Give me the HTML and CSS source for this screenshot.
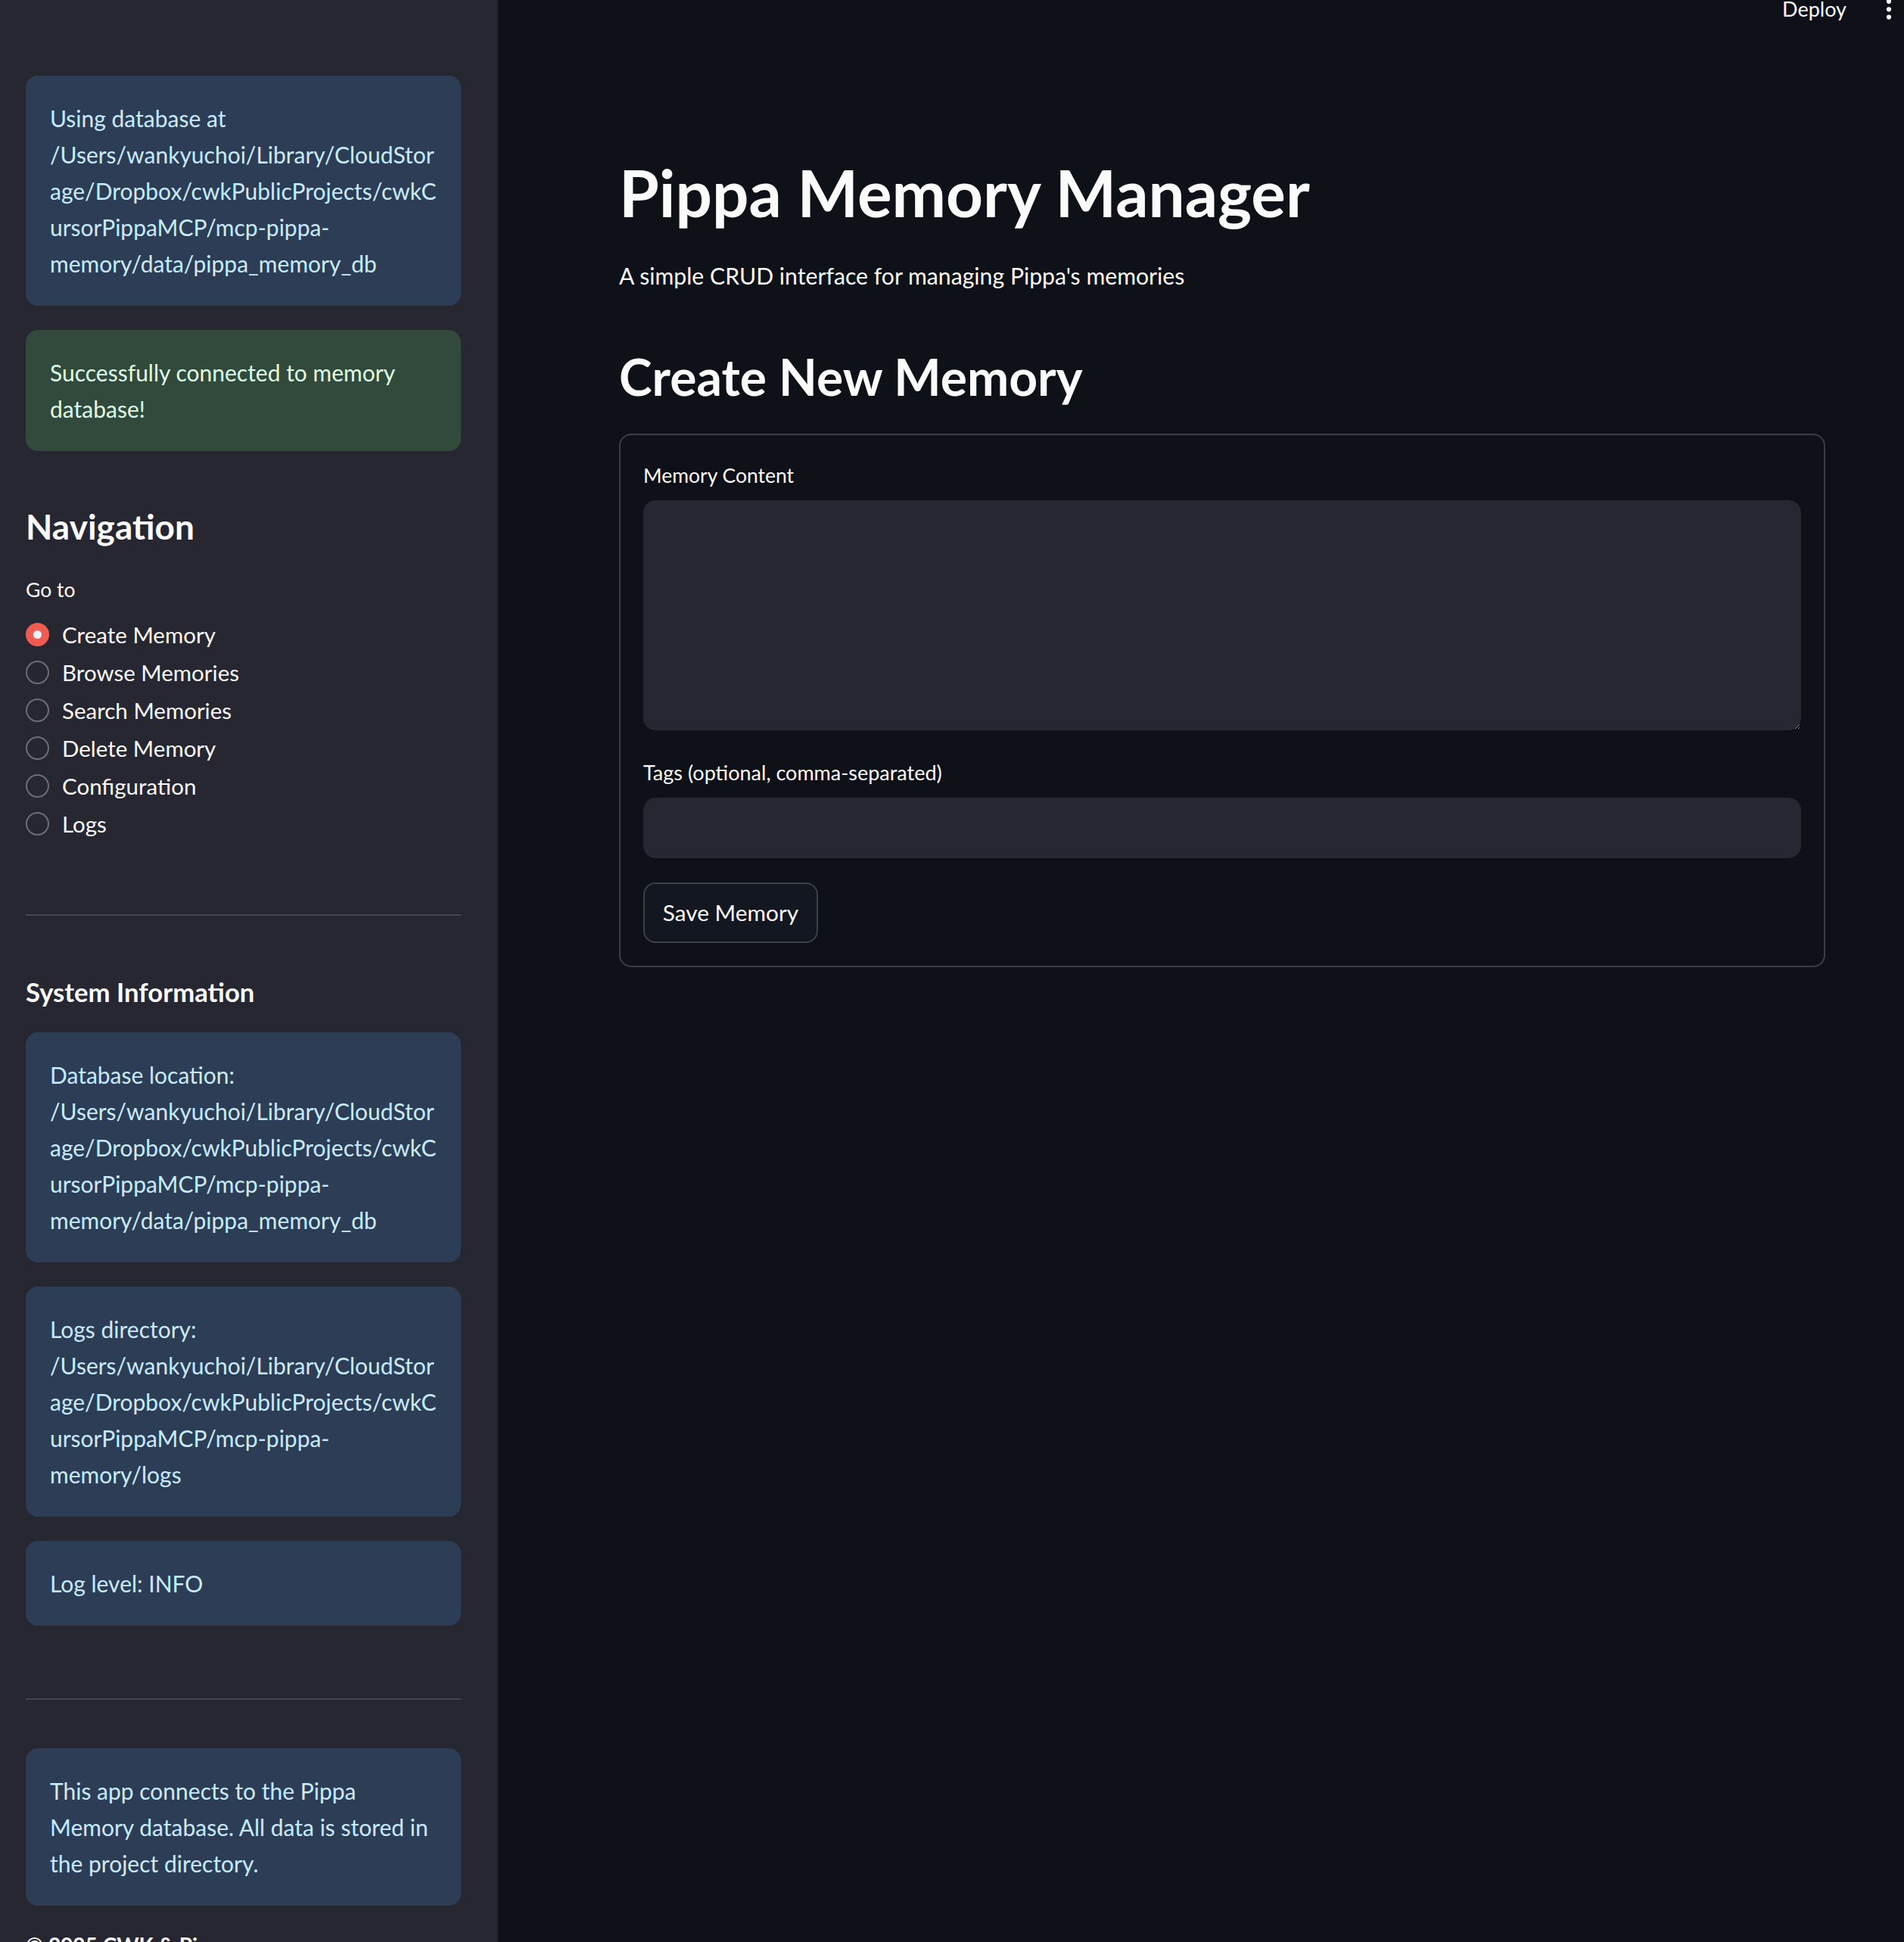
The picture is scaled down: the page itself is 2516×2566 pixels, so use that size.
FILE: index.html
```html
<!DOCTYPE html>
<html lang="en">
<head>
<meta charset="utf-8">
<title>Pippa Memory Manager</title>
<link rel="stylesheet" href="styles.css">
</head>
<body>
<div class="app">
  <aside class="sidebar">
    <div class="alert info first">Using database at<br>/Users/wankyuchoi/Library/CloudStor<br>age/Dropbox/cwkPublicProjects/cwkC<br>ursorPippaMCP/mcp-pippa-<br>memory/data/pippa_memory_db</div>
    <div class="alert success">Successfully connected to memory database!</div>

    <h2 class="side-h2">Navigation</h2>
    <div class="widget-label">Go to</div>
    <div class="radio-group">
      <div class="radio-item selected"><span class="radio-dot"></span><span class="radio-text">Create Memory</span></div>
      <div class="radio-item"><span class="radio-dot"></span><span class="radio-text">Browse Memories</span></div>
      <div class="radio-item"><span class="radio-dot"></span><span class="radio-text">Search Memories</span></div>
      <div class="radio-item"><span class="radio-dot"></span><span class="radio-text">Delete Memory</span></div>
      <div class="radio-item"><span class="radio-dot"></span><span class="radio-text">Configuration</span></div>
      <div class="radio-item"><span class="radio-dot"></span><span class="radio-text">Logs</span></div>
    </div>

    <hr class="divider nav-divider">

    <h3 class="side-h3">System Information</h3>
    <div class="alert info sys-first">Database location:<br>/Users/wankyuchoi/Library/CloudStor<br>age/Dropbox/cwkPublicProjects/cwkC<br>ursorPippaMCP/mcp-pippa-<br>memory/data/pippa_memory_db</div>
    <div class="alert info">Logs directory:<br>/Users/wankyuchoi/Library/CloudStor<br>age/Dropbox/cwkPublicProjects/cwkC<br>ursorPippaMCP/mcp-pippa-<br>memory/logs</div>
    <div class="alert info">Log level: INFO</div>

    <hr class="divider info-divider">

    <div class="alert info about">This app connects to the Pippa Memory database. All data is stored in the project directory.</div>
    <div class="copyright">© 2025 CWK &amp; Pippa</div>
  </aside>

  <main class="main">
    <header class="topbar">
      <span class="deploy">Deploy</span>
      <svg class="kebab" width="8" height="28" viewBox="0 0 8 28" aria-hidden="true">
        <circle cx="4" cy="1.8" r="3.1" fill="#fafafa"/>
        <circle cx="4" cy="12.3" r="3.1" fill="#fafafa"/>
        <circle cx="4" cy="22.6" r="3.1" fill="#fafafa"/>
      </svg>
    </header>

    <div class="block">
      <h1 class="title">Pippa Memory Manager</h1>
      <p class="subtitle">A simple CRUD interface for managing Pippa's memories</p>
      <h2 class="section">Create New Memory</h2>

      <form class="form">
        <label class="field-label">Memory Content</label>
        <textarea class="textarea"></textarea>
        <label class="field-label tags-label">Tags (optional, comma-separated)</label>
        <input class="text-input" type="text">
        <button class="btn" type="button">Save Memory</button>
      </form>
    </div>
  </main>
</div>
</body>
</html>
```

FILE: styles.css
```css
html, body {
  margin: 0;
  padding: 0;
  height: 100%;
  overflow: hidden;
  background: #0e1117;
}

body {
  font-family: Lato, "Noto Sans", sans-serif;
  color: #fafafa;
}

.app {
  display: flex;
  height: 2566px;
  overflow: hidden;
}

/* ---------- Sidebar ---------- */
.sidebar {
  width: 658px;
  flex: 0 0 658px;
  box-sizing: border-box;
  background: #262730;
  padding: 0 49px 0 34px;
  display: flex;
  flex-direction: column;
  overflow: hidden;
}

.sidebar > * {
  flex-shrink: 0;
}

.alert {
  border-radius: 16px;
  padding: 32px;
  font-size: 30px;
  line-height: 48px;
  margin-top: 32px;
  overflow-wrap: anywhere;
}

.alert.info {
  background: #2e3d56;
  color: #c7ebff;
}

.alert.success {
  background: #314a3c;
  color: #dffde9;
}

.alert.first { margin-top: 100px; }

.side-h2 {
  margin: 71px 0 0;
  font-size: 46px;
  line-height: 57.6px;
  font-weight: 700;
  color: #fafafa;
}

.widget-label {
  margin-top: 32px;
  font-size: 26.5px;
  line-height: 44.8px;
  color: #fafafa;
}

.radio-group {
  margin-top: 12px;
  display: flex;
  flex-direction: column;
}

.radio-item {
  height: 50px;
  display: flex;
  align-items: center;
  gap: 17px;
  font-size: 29.5px;
  color: #fafafa;
}

.radio-dot {
  width: 31px;
  height: 31px;
  box-sizing: border-box;
  border-radius: 50%;
  border: 2px solid #6d6e75;
  flex: 0 0 31px;
  position: relative;
}

.radio-item.selected .radio-dot {
  border: none;
  background: #ef5a52;
}

.radio-item.selected .radio-dot::after {
  content: "";
  position: absolute;
  left: 50%;
  top: 50%;
  width: 11px;
  height: 11px;
  margin: -5.5px 0 0 -5.5px;
  border-radius: 50%;
  background: #f0f2f6;
}

.divider {
  display: block;
  border: none;
  height: 2px;
  background: #45464d;
  margin: 0;
  overflow: visible;
}

.nav-divider { margin-top: 95px; }

.side-h3 {
  margin: 79px 0 0;
  font-size: 34.7px;
  line-height: 43.2px;
  font-weight: 700;
  color: #fafafa;
}

.alert.sys-first { margin-top: 31px; }

.info-divider { margin-top: 96px; }

.alert.about { margin-top: 64px; }

.copyright {
  margin-top: 30px;
  font-size: 28px;
  line-height: 44.8px;
  font-weight: 700;
  color: #fafafa;
  white-space: nowrap;
}

/* ---------- Main ---------- */
.main {
  flex: 1 1 auto;
  position: relative;
  background: #0e1117;
  padding: 0 104px 0 160px;
  box-sizing: border-box;
}

.topbar {
  position: absolute;
  top: -5px;
  right: 16px;
  display: flex;
  align-items: flex-start;
  gap: 52px;
}

.deploy {
  font-size: 27px;
  line-height: 33.6px;
  color: #fafafa;
}

.kebab {
  margin-top: 5px;
}

.block {
  padding-top: 204px;
}

.title {
  margin: 0;
  font-size: 85.4px;
  line-height: 100.8px;
  font-weight: 700;
  color: #fafafa;
}

.subtitle {
  margin: 35px 0 0;
  font-size: 30.2px;
  line-height: 48px;
  color: #fafafa;
}

.section {
  margin: 70px 0 0;
  font-size: 66px;
  line-height: 1.2;
  font-weight: 700;
  color: #fafafa;
}

.form {
  margin-top: 36px;
  border: 2px solid #3c3e44;
  border-radius: 16px;
  padding: 31px 30px 30px;
  display: flex;
  flex-direction: column;
  align-items: flex-start;
}

.field-label {
  font-size: 26.5px;
  line-height: 44.8px;
  color: #fafafa;
}

.textarea {
  margin-top: 10px;
  width: 100%;
  height: 304px;
  box-sizing: border-box;
  background: #262730;
  border: 1px solid #262730;
  border-radius: 16px;
  color: #fafafa;
  font-family: inherit;
  font-size: 30px;
  padding: 16px 24px;
  resize: vertical;
  outline: none;
}

.tags-label {
  margin-top: 34px;
  font-size: 27px;
}

.text-input {
  margin-top: 10px;
  width: 100%;
  height: 80px;
  box-sizing: border-box;
  background: #262730;
  border: 1px solid #262730;
  border-radius: 16px;
  color: #fafafa;
  font-family: inherit;
  font-size: 30px;
  padding: 0 24px;
  outline: none;
}

.btn {
  margin-top: 32px;
  width: 231px;
  height: 80px;
  box-sizing: border-box;
  background: #131720;
  border: 2px solid #3e4046;
  border-radius: 16px;
  color: #fafafa;
  font-family: inherit;
  font-size: 29.8px;
  padding: 0;
}
```
